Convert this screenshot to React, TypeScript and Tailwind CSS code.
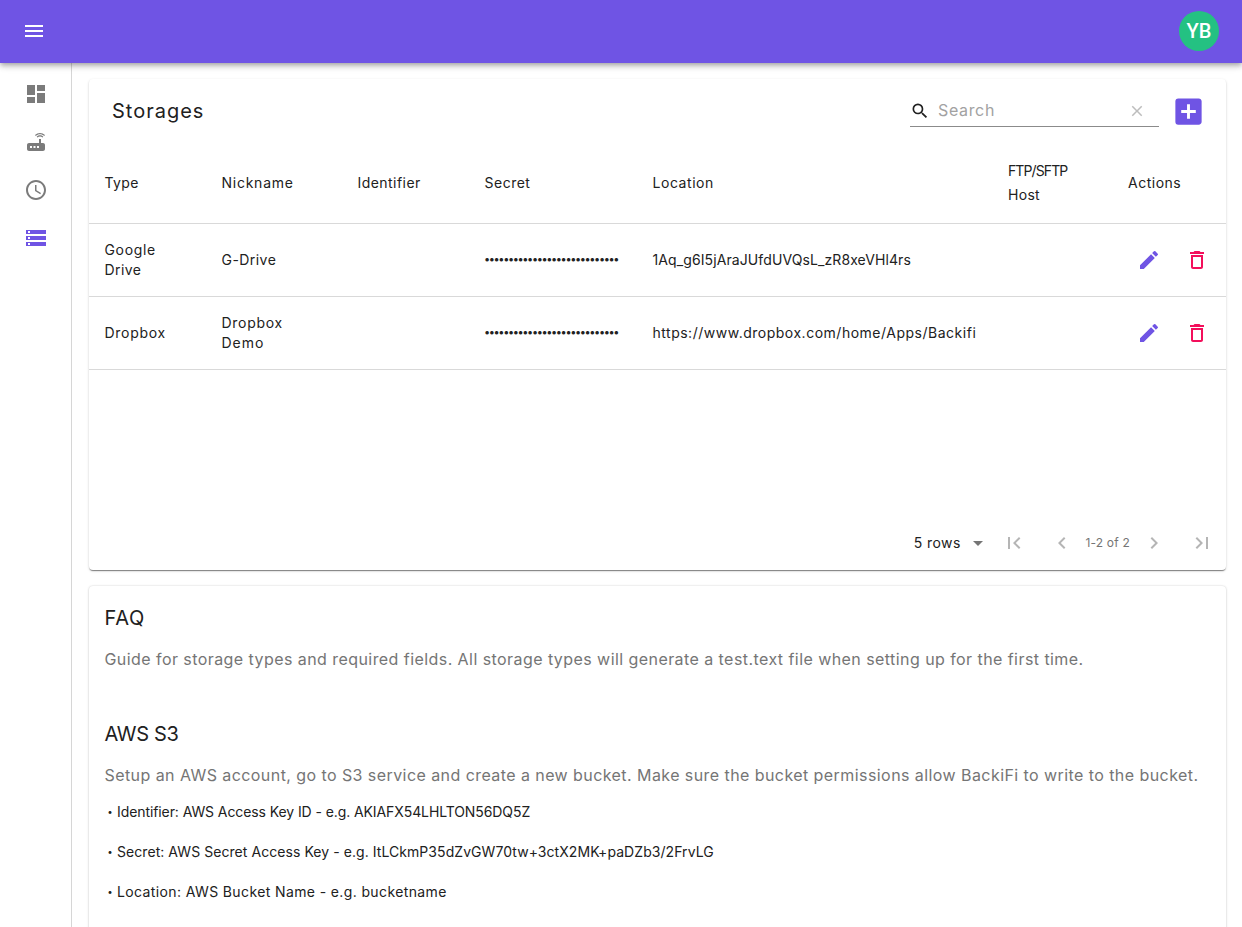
import React from "react";
import {
  MdMenu,
  MdDashboard,
  MdRouter,
  MdAccessTime,
  MdStorage,
  MdSearch,
  MdClear,
  MdAddBox,
  MdEdit,
  MdDeleteOutline,
  MdArrowDropDown,
  MdFirstPage,
  MdChevronLeft,
  MdChevronRight,
  MdLastPage,
} from "react-icons/md";

const COLUMNS = "grid grid-cols-[116px_136px_127px_168px_356px_120px_114px] items-center";
const DOTS = "•".repeat(28);

function Header() {
  return (
    <header className="relative z-10 flex h-[63px] shrink-0 items-center justify-between bg-[#6f54e4] pb-[2px] pl-[22px] pr-[23px] text-white shadow-[0_2px_4px_-1px_rgba(0,0,0,0.2),0_4px_5px_0_rgba(0,0,0,0.14),0_1px_10px_0_rgba(0,0,0,0.12)]">
      <button aria-label="Menu">
        <MdMenu size={24} />
      </button>
      <div className="flex size-10 items-center justify-center rounded-full bg-[#24c182] font-[Roboto] text-[20px] font-medium">
        YB
      </div>
    </header>
  );
}

function Sidebar() {
  return (
    <nav className="flex w-[72px] shrink-0 flex-col items-center gap-6 border-r border-[#d6d6d6] pt-[19px] text-[#7b7b7b]">
      <MdDashboard size={24} />
      <MdRouter size={24} />
      <MdAccessTime size={24} />
      <MdStorage size={24} className="text-[#6f54e4]" />
    </nav>
  );
}

type Row = {
  type: React.ReactNode;
  nickname: React.ReactNode;
  location: React.ReactNode;
};

const rows: Row[] = [
  {
    type: <><span className="tracking-[0.65px]">Google</span><br /><span className="tracking-[0.4px]">Drive</span></>,
    nickname: <span className="tracking-[0.45px]">G-Drive</span>,
    location: <span className="tracking-[0.1px]">1Aq_g6I5jAraJUfdUVQsL_zR8xeVHl4rs</span>,
  },
  {
    type: <span className="tracking-[0.7px]">Dropbox</span>,
    nickname: <><span className="tracking-[0.7px]">Dropbox</span><br /><span className="tracking-[1px]">Demo</span></>,
    location: <span className="tracking-[0.51px]">https://www.dropbox.com/home/Apps/Backifi</span>,
  },
];

function StorageTable() {
  return (
    <div className="text-[14px]">
      <div className={`${COLUMNS} h-[81px] border-b border-[#d9d9d9] leading-6`}>
        <span className="pl-[15.5px] tracking-[0.4px]">Type</span>
        <span className="pl-[16.5px] tracking-[0.75px]">Nickname</span>
        <span className="pl-[16.5px] tracking-[0.45px]">Identifier</span>
        <span className="pl-[16.5px] tracking-[0.5px]">Secret</span>
        <span className="pl-[16.5px] tracking-[0.55px]">Location</span>
        <span className="pl-4"><span className="tracking-[-0.9px]">FTP/SFTP</span><br /><span className="tracking-[0.3px]">Host</span></span>
        <span className="pl-4 tracking-[0.5px]">Actions</span>
      </div>
      {rows.map((row, i) => (
        <div key={i} className={`${COLUMNS} h-[73px] border-b border-[#d9d9d9] leading-5`}>
          <span className="pl-[15.5px]">{row.type}</span>
          <span className="pl-[16.5px]">{row.nickname}</span>
          <span />
          <span className="mb-[2px] ml-[16px] w-[137px] overflow-hidden whitespace-nowrap text-[11px] tracking-[-1.4px]">{DOTS}</span>
          <span className="whitespace-nowrap pl-[16.5px]">{row.location}</span>
          <span />
          <span className="flex gap-6 pl-[25px]">
            <MdEdit size={24} className="text-[#6f54e4]" />
            <MdDeleteOutline size={24} className="text-[#f30f5b]" />
          </span>
        </div>
      ))}
    </div>
  );
}

function StoragesCard() {
  return (
    <section className="flex h-[491px] shrink-0 flex-col rounded-[4px] bg-white shadow-[0_2px_1px_-1px_rgba(0,0,0,0.3),0_1px_1px_0_rgba(0,0,0,0.2),0_1px_3px_0_rgba(0,0,0,0.14)]">
      <div className="flex h-16 shrink-0 items-center pl-[23px] pr-[20px]">
        <h2 className="text-[20px] font-normal leading-8 tracking-[1px]">Storages</h2>
        <div className="ml-auto mr-3 flex h-8 w-[249px] items-center border-b border-[#8b8b8b] text-[16px]">
          <MdSearch size={20} />
          <span className="mb-[2px] ml-2 tracking-[0.65px] text-[#a2a2a2]">Search</span>
          <MdClear size={18} className="ml-auto mr-[13px] text-[#bdbdbd]" />
        </div>
        <MdAddBox size={35} className="text-[#6f54e4]" />
      </div>
      <StorageTable />
      <div className="mt-auto flex h-14 items-center pr-3 pt-px text-[14px]">
        <span className="ml-auto tracking-[0.45px]">5 rows</span>
        <MdArrowDropDown size={24} className="ml-[5.5px] text-[#757575]" />
        <MdFirstPage size={24} className="ml-3 text-[#b5b5b5]" />
        <MdChevronLeft size={24} className="ml-6 text-[#b5b5b5]" />
        <span className="ml-[11px] mr-3 pt-px text-[12px] tracking-[0.2px] text-[#757575]">1-2 of 2</span>
        <MdChevronRight size={24} className="text-[#b5b5b5]" />
        <MdLastPage size={24} className="ml-6 text-[#b5b5b5]" />
      </div>
    </section>
  );
}

function Bullet() {
  return <span className="-ml-[1.5px] tracking-normal">・</span>;
}

function FaqCard() {
  return (
    <section className="mt-4 flex h-[400px] shrink-0 flex-col items-start whitespace-nowrap rounded-[4px] bg-white pl-[15.5px] pt-4 shadow-[0_0_2px_0_rgba(0,0,0,0.18),0_1px_3px_0_rgba(0,0,0,0.1)]">
      <h2 className="text-[20px] font-normal leading-8 tracking-[0.7px]">FAQ</h2>
      <p className="mt-[13px] text-[16px] leading-6 tracking-[0.435px] text-[#757575]">
        Guide for storage types and required fields. All storage types will generate a test.text file when setting up for the first time.
      </p>
      <h2 className="mt-[47px] text-[20px] font-normal leading-8 tracking-[-0.35px]">AWS S3</h2>
      <p className="mt-[13px] text-[16px] leading-6 tracking-[0.43px] text-[#757575]">
        Setup an AWS account, go to S3 service and create a new bucket. Make sure the bucket permissions allow BackiFi to write to the bucket.
      </p>
      <ul className="mt-[15px] flex flex-col items-start gap-5 text-[14px] leading-5">
        <li className="tracking-[-0.09px]"><Bullet />Identifier: AWS Access Key ID - e.g. AKIAFX54LHLTON56DQ5Z</li>
        <li className="tracking-[0.06px]"><Bullet />Secret: AWS Secret Access Key - e.g. ItLCkmP35dZvGW70tw+3ctX2MK+paDZb3/2FrvLG</li>
        <li className="tracking-[0.38px]"><Bullet />Location: AWS Bucket Name - e.g. bucketname</li>
      </ul>
    </section>
  );
}

export default function App() {
  return (
    <div className="flex h-[927px] w-[1242px] flex-col overflow-hidden bg-white font-[Inter,'Noto_Sans_CJK_JP',sans-serif] text-[#212121]">
      <Header />
      <div className="flex min-h-0 flex-1">
        <Sidebar />
        <main className="flex w-[1154px] flex-col pl-[17px] pt-4">
          <StoragesCard />
          <FaqCard />
        </main>
      </div>
    </div>
  );
}
